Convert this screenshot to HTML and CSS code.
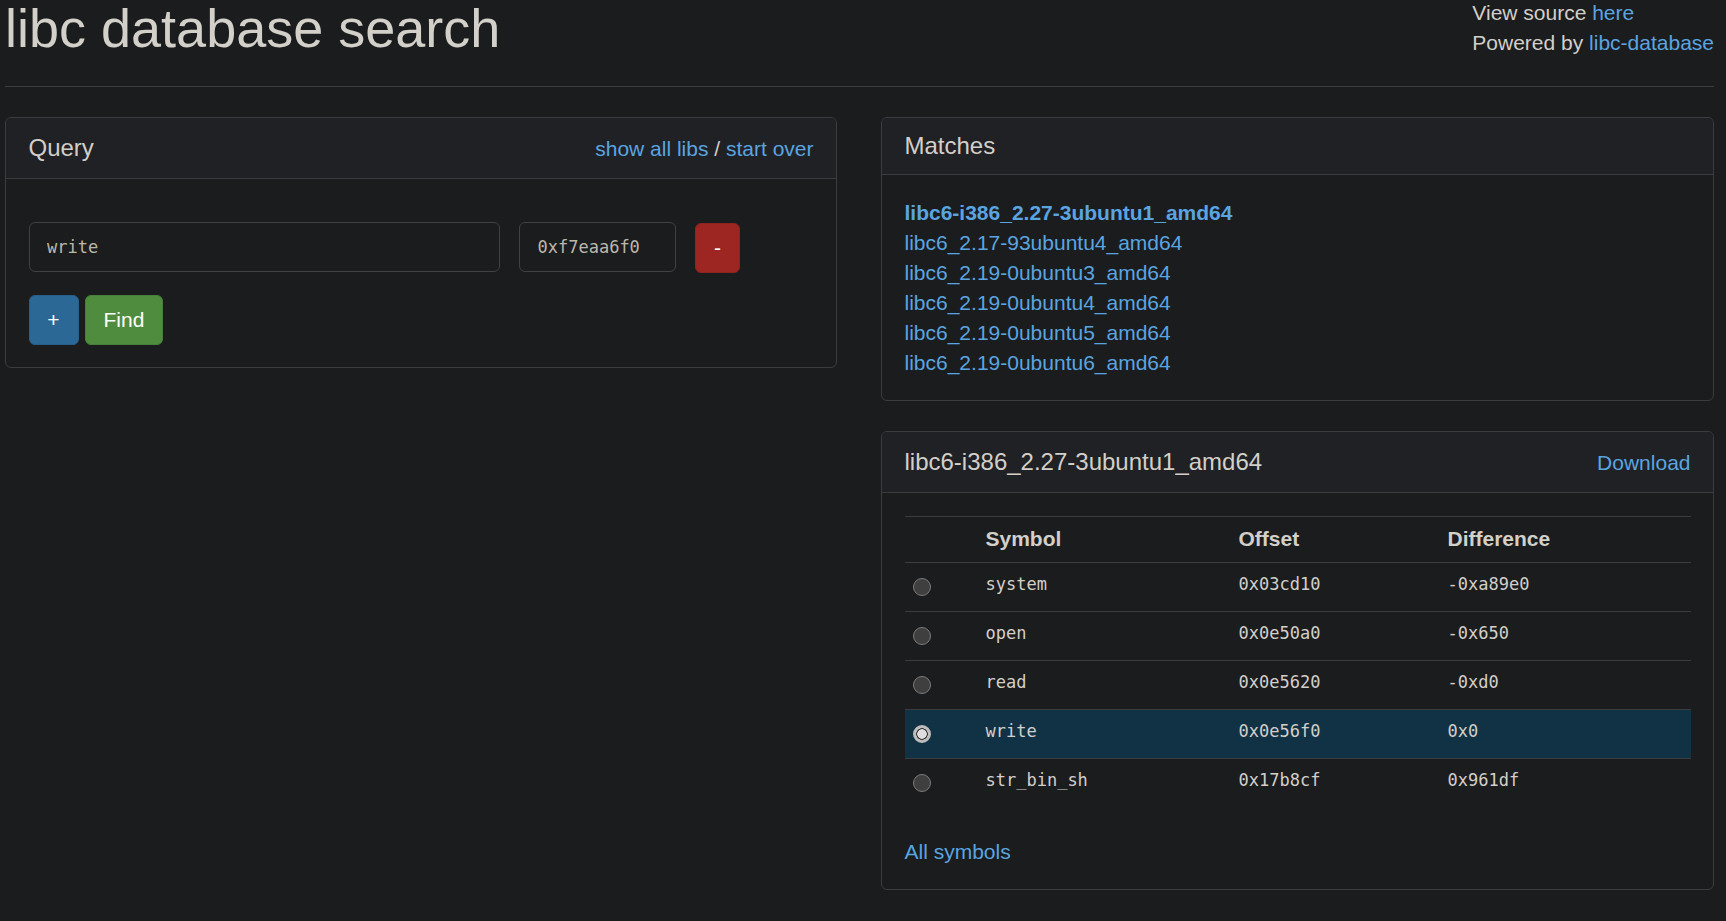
FILE: index.html
```html
<!DOCTYPE html>
<html lang="en">
<head>
<meta charset="utf-8">
<title>libc database search</title>
<link rel="stylesheet" href="styles.css">
</head>
<body>
<div class="page">
  <header class="top">
    <h1 class="title">libc database search</h1>
    <div class="source">
      <div>View source <a href="#">here</a></div>
      <div>Powered by <a href="#">libc-database</a></div>
    </div>
  </header>
  <hr class="rule">
  <div class="columns">
    <div class="col">
      <section class="panel">
        <div class="panel-heading heading-row">
          <span class="panel-title">Query</span>
          <span class="heading-links"><a href="#">show all libs</a> / <a href="#">start over</a></span>
        </div>
        <div class="panel-body query-body">
          <div class="query-row">
            <input class="field field-symbol" type="text" value="write">
            <input class="field field-addr" type="text" value="0xf7eaa6f0">
            <button class="btn btn-danger btn-remove" type="button">-</button>
          </div>
          <div class="actions">
            <button class="btn btn-primary" type="button">+</button>
            <button class="btn btn-success" type="button">Find</button>
          </div>
        </div>
      </section>
    </div>
    <div class="col">
      <section class="panel">
        <div class="panel-heading">
          <h3 class="panel-title title-block">Matches</h3>
        </div>
        <div class="panel-body">
          <ul class="matches">
            <li><a href="#" class="current">libc6-i386_2.27-3ubuntu1_amd64</a></li>
            <li><a href="#">libc6_2.17-93ubuntu4_amd64</a></li>
            <li><a href="#">libc6_2.19-0ubuntu3_amd64</a></li>
            <li><a href="#">libc6_2.19-0ubuntu4_amd64</a></li>
            <li><a href="#">libc6_2.19-0ubuntu5_amd64</a></li>
            <li><a href="#">libc6_2.19-0ubuntu6_amd64</a></li>
          </ul>
        </div>
      </section>
      <section class="panel">
        <div class="panel-heading heading-row">
          <span class="panel-title">libc6-i386_2.27-3ubuntu1_amd64</span>
          <a href="#">Download</a>
        </div>
        <div class="panel-body">
          <table class="symbols">
            <thead>
              <tr>
                <th class="c-radio"></th>
                <th class="c-sym">Symbol</th>
                <th class="c-off">Offset</th>
                <th class="c-diff">Difference</th>
              </tr>
            </thead>
            <tbody>
              <tr>
                <td class="c-radio"><input class="radio" type="radio" name="base"></td>
                <td class="mono">system</td>
                <td class="mono">0x03cd10</td>
                <td class="mono">-0xa89e0</td>
              </tr>
              <tr>
                <td class="c-radio"><input class="radio" type="radio" name="base"></td>
                <td class="mono">open</td>
                <td class="mono">0x0e50a0</td>
                <td class="mono">-0x650</td>
              </tr>
              <tr>
                <td class="c-radio"><input class="radio" type="radio" name="base"></td>
                <td class="mono">read</td>
                <td class="mono">0x0e5620</td>
                <td class="mono">-0xd0</td>
              </tr>
              <tr class="info">
                <td class="c-radio"><input class="radio" type="radio" name="base" checked></td>
                <td class="mono">write</td>
                <td class="mono">0x0e56f0</td>
                <td class="mono">0x0</td>
              </tr>
              <tr>
                <td class="c-radio"><input class="radio" type="radio" name="base"></td>
                <td class="mono">str_bin_sh</td>
                <td class="mono">0x17b8cf</td>
                <td class="mono">0x961df</td>
              </tr>
            </tbody>
          </table>
          <a href="#" class="all-symbols">All symbols</a>
        </div>
      </section>
    </div>
  </div>
</div>
</body>
</html>
```

FILE: styles.css
```css
* {
  box-sizing: border-box;
}

html, body {
  margin: 0;
  padding: 0;
  background: #1b1c1e;
}

body {
  font-family: "Liberation Sans", Arial, Helvetica, sans-serif;
  font-size: 21px;
  line-height: 30px;
  color: #d3cfc9;
}

a {
  color: #5aa5e0;
  text-decoration: none;
}

.page {
  padding: 0 12px 0 5px;
}

.top {
  display: flex;
  justify-content: space-between;
  align-items: flex-start;
}

.title {
  margin: 0;
  font-size: 54px;
  line-height: 56px;
  font-weight: 400;
  color: #d3cfc9;
}

.source {
  margin-top: -2px;
  white-space: nowrap;
  flex: none;
}

.rule {
  margin: 28px 0 30px;
  border: 0;
  border-top: 1px solid #3a3c3f;
  height: 0;
}

.columns {
  display: grid;
  grid-template-columns: 1fr 1fr;
  column-gap: 44px;
  align-items: start;
}

.col {
  display: flex;
  flex-direction: column;
  gap: 30px;
}

.panel {
  border: 1px solid #3a3d40;
  border-radius: 6px;
  background: #1b1c1e;
}

.panel-heading {
  background: #202124;
  border-bottom: 1px solid #3a3d40;
  border-radius: 5px 5px 0 0;
  padding: 15px 22.5px;
}

.heading-row {
  display: flex;
  justify-content: space-between;
  align-items: baseline;
  line-height: 30px;
  padding-top: 14.5px;
  padding-bottom: 14.5px;
}

.panel-title {
  font-size: 24px;
  font-weight: 400;
  color: #d3cfc9;
}

.title-block {
  margin: 0;
  line-height: 26.4px;
}

.panel-body {
  padding: 22.5px;
}

.query-body {
  padding: 43px 22.5px 22px;
}

.query-row {
  display: flex;
  align-items: flex-start;
}

.field {
  height: 50px;
  border: 1px solid #3e4245;
  border-radius: 6px;
  background: #1b1c1e;
  color: #bdb7ab;
  font-family: "DejaVu Sans Mono", "Liberation Mono", monospace;
  font-size: 17px;
  padding: 0 17.5px;
  outline: none;
}

.field-symbol {
  width: 471px;
}

.field-addr {
  width: 157px;
  margin-left: 19.5px;
}

.btn {
  height: 50px;
  border-radius: 6px;
  border: 1px solid transparent;
  padding: 0 18px;
  font-family: "Liberation Sans", Arial, Helvetica, sans-serif;
  font-size: 21px;
  line-height: 30px;
  color: #ffffff;
  cursor: pointer;
}

.btn-remove {
  margin-left: 19px;
  margin-top: 1px;
  width: 45px;
  padding: 0;
}

.btn-danger {
  background: #9e2622;
  border-color: #8e2320;
}

.btn-primary {
  background: #2c6896;
  border-color: #285f8a;
  width: 50px;
  padding: 0;
}

.btn-success {
  background: #508c3d;
  border-color: #46803a;
  margin-left: 6px;
}

.actions {
  display: flex;
  margin-top: 22px;
}

.matches {
  list-style: none;
  margin: 0;
  padding: 0;
}

.matches li {
  line-height: 30px;
}

.matches .current {
  font-weight: 700;
}

.symbols {
  width: 100%;
  border-collapse: separate;
  border-spacing: 0;
  table-layout: fixed;
  margin-bottom: 30px;
}

.symbols th {
  text-align: left;
  font-weight: 700;
  font-size: 21px;
  line-height: 30px;
  padding: 7px 12px 8px;
  border-top: 1px solid #3a3d40;
  border-bottom: 1px solid #3a3d40;
  color: #d3cfc9;
}

.symbols td {
  height: 48px;
  padding: 0 12px 6px;
  vertical-align: middle;
}

.symbols tbody tr + tr td {
  height: 49px;
  border-top: 1px solid #3a3d40;
}

.symbols tr.info td {
  background: #113245;
}

.c-radio {
  width: 69px;
}

.c-sym {
  width: 253px;
}

.c-off {
  width: 209px;
}

.c-diff {
  width: 255px;
}

.symbols td.c-radio {
  padding: 0 0 0 8px;
}

.mono {
  font-family: "DejaVu Sans Mono", "Liberation Mono", monospace;
  font-size: 17px;
  line-height: 30px;
  color: #d3cfc9;
}

.radio {
  appearance: none;
  -webkit-appearance: none;
  display: block;
  margin: 0;
  width: 18px;
  height: 18px;
  border-radius: 50%;
  border: 1.5px solid #7b7b7b;
  background: #3f3f3f;
}

.radio:checked {
  border: 2px solid #bdbdbd;
  background: radial-gradient(circle, #dedede 0 4.5px, #2e2e2e 5px 5.5px, #bdbdbd 6px);
}

.all-symbols {
  display: block;
  line-height: 30px;
}
```
